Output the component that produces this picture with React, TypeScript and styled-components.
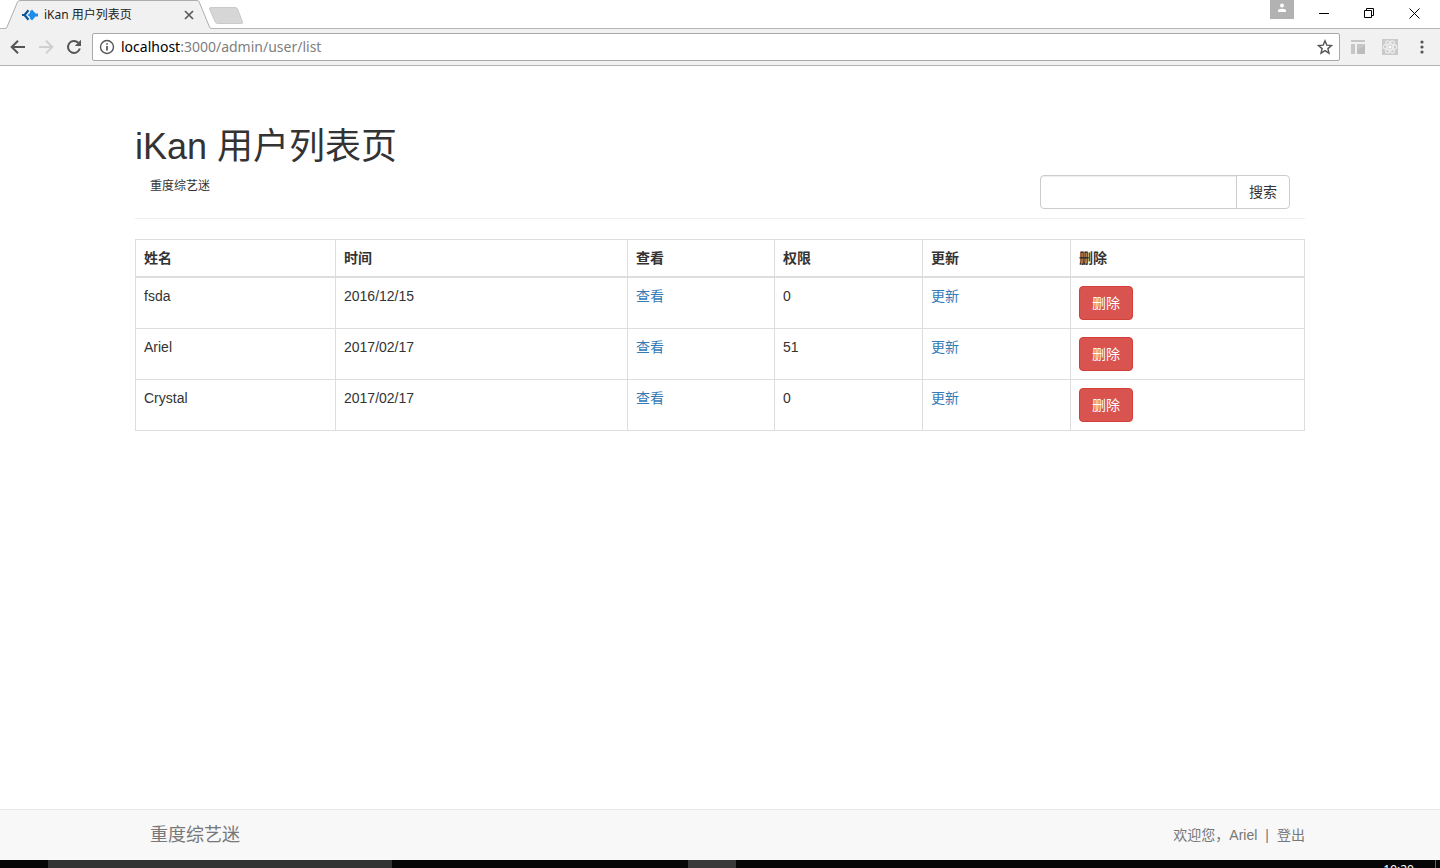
import React from "react";
import styled, { createGlobalStyle } from "styled-components";

const latin = '"Liberation Sans", "Noto Sans CJK SC", sans-serif';
const chromeFont = '"Noto Sans", "Noto Sans CJK SC", sans-serif';

const GlobalStyle = createGlobalStyle`
  *, *::before, *::after { box-sizing: border-box; }
  body {
    margin: 0;
    background: #fff;
    color: #333;
    font-family: ${latin};
    font-size: 14px;
    line-height: 20px;
  }
  button, input { font: inherit; margin: 0; }
`;

const Screen = styled.div`
  display: flex;
  flex-direction: column;
  min-height: 100vh;
`;

/* ---------- browser window ---------- */

const TabStrip = styled.div`
  display: flex;
  align-items: flex-start;
  height: 29px;
  border-bottom: 1px solid #b6b6b6;
  padding: 0 3px 0 5px;
`;

const Tab = styled.div`
  position: relative;
  display: flex;
  align-items: center;
  width: 207px;
  height: 29px;
  padding: 0 16px;
  gap: 5px;
  color: #222;
  font-family: ${chromeFont};
  font-size: 12px;
  line-height: 16px;
`;

const TabShape = styled.svg`
  position: absolute;
  inset: 0;
`;

const TabIcon = styled.svg`
  position: relative;
  flex: none;
`;

const TabTitle = styled.span`
  position: relative;
  flex: 1;
  white-space: nowrap;
`;

const PlainButton = styled.button`
  position: relative;
  display: flex;
  align-items: center;
  justify-content: center;
  flex: none;
  padding: 0;
  border: 0;
  background: none;
`;

const TabClose = styled(PlainButton)`
  width: 14px;
  height: 16px;
`;

const NewTab = styled(PlainButton)`
  margin: 6px 0 0 -4px;
`;

const WindowControls = styled.div`
  display: flex;
  align-items: flex-start;
  margin-left: auto;
`;

const ProfileButton = styled(PlainButton)`
  width: 24px;
  height: 19px;
  margin-right: 8px;
  padding-bottom: 3px;
  background: #b2b2b2;
`;

const WindowButton = styled(PlainButton)`
  width: 45px;
  height: 27px;
`;

const Toolbar = styled.div`
  display: flex;
  align-items: center;
  height: 37px;
  padding: 0 2px 0 4px;
  background: #f1f1f1;
  border-bottom: 1px solid #b3b3b3;
`;

const ToolButton = styled(PlainButton)<{ $width?: number }>`
  width: ${(p) => p.$width ?? 28}px;
  height: 28px;
`;

const AddressBox = styled.div`
  display: flex;
  align-items: center;
  flex: 1;
  height: 28px;
  margin: 0 2px 0 4px;
  padding: 0 6px;
  gap: 6px;
  background: #fff;
  border: 1px solid #a9a9a9;
  border-radius: 2px;
`;

const Address = styled.span`
  flex: 1;
  color: #808080;
  font-family: ${chromeFont};
  font-size: 14px;
  line-height: 20px;
`;

const Host = styled.span`
  color: #000;
`;

/* ---------- web page ---------- */

const Page = styled.main`
  flex: 1;
  width: 100%;
  max-width: 1200px;
  margin: 0 auto;
  padding: 61px 15px 20px;
`;

const Title = styled.h1`
  margin: 0;
  font-size: 36px;
  font-weight: 400;
  line-height: 40px;
`;

const SubHeader = styled.div`
  display: flex;
  justify-content: space-between;
  align-items: flex-start;
  margin: 8px 0 20px;
  padding: 0 15px 9px;
  border-bottom: 1px solid #eee;
`;

const SubTitle = styled.small`
  font-size: 12px;
  line-height: 22px;
`;

const SearchForm = styled.form`
  display: flex;
  width: 250px;
  height: 34px;
`;

const SearchInput = styled.input`
  flex: 1;
  min-width: 0;
  padding: 6px 12px;
  color: #555;
  background: #fff;
  border: 1px solid #ccc;
  border-radius: 4px 0 0 4px;
  box-shadow: inset 0 1px 1px rgba(0, 0, 0, 0.075);
`;

const Button = styled.button<{ $danger?: boolean; $attached?: boolean }>`
  padding: 6px 12px;
  margin-left: ${(p) => (p.$attached ? "-1px" : "0")};
  color: ${(p) => (p.$danger ? "#fff" : "#333")};
  background: ${(p) => (p.$danger ? "#d9534f" : "#fff")};
  border: 1px solid ${(p) => (p.$danger ? "#d43f3a" : "#ccc")};
  border-radius: ${(p) => (p.$attached ? "0 4px 4px 0" : "4px")};
  line-height: 20px;
  cursor: pointer;
`;

const UserTable = styled.table`
  width: 100%;
  border-collapse: collapse;
  table-layout: fixed;
  border: 1px solid #ddd;
`;

const Col = styled.col<{ $width: string }>`
  width: ${(p) => p.$width};
`;

const HeadCell = styled.th`
  padding: 8px;
  text-align: left;
  border: 1px solid #ddd;
  border-bottom-width: 2px;
`;

const Cell = styled.td`
  padding: 8px;
  vertical-align: top;
  border: 1px solid #ddd;
`;

const TextLink = styled.a`
  color: #337ab7;
  text-decoration: none;
`;

const Footer = styled.footer`
  height: 51px;
  background: #f8f8f8;
  border-top: 1px solid #e7e7e7;
`;

const FooterInner = styled.div`
  display: flex;
  align-items: center;
  justify-content: space-between;
  max-width: 1200px;
  height: 50px;
  margin: 0 auto;
  padding: 0 15px 0 30px;
  color: #777;
`;

const Brand = styled.a`
  color: #777;
  font-size: 18px;
  text-decoration: none;
`;

const Welcome = styled.p`
  display: flex;
  gap: 8px;
  margin: 0;
`;

const FooterLink = styled.a`
  color: #777;
  text-decoration: none;
`;

/* ---------- desktop task bar ---------- */

const TaskBar = styled.div`
  display: flex;
  height: 8px;
  overflow: hidden;
  background: #060606;
`;

const TaskItem = styled.div<{ $width: number; $tone?: string }>`
  flex: none;
  width: ${(p) => p.$width}px;
  background: ${(p) => p.$tone ?? "transparent"};
`;

const Clock = styled.time`
  margin: 0 4px 0 auto;
  padding: 2px 21px 0 0;
  border-right: 1px solid #666;
  color: #fff;
  font-family: ${chromeFont};
  font-size: 12px;
  line-height: 16px;
`;

const users = [
  { name: "fsda", date: "2016/12/15", role: 0 },
  { name: "Ariel", date: "2017/02/17", role: 51 },
  { name: "Crystal", date: "2017/02/17", role: 0 },
];

const columns = [
  { label: "姓名", width: "200px" },
  { label: "时间", width: "292px" },
  { label: "查看", width: "147px" },
  { label: "权限", width: "148px" },
  { label: "更新", width: "148px" },
  { label: "删除", width: "auto" },
];

function BrowserTabs() {
  return (
    <TabStrip>
      <Tab>
        <TabShape width="207" height="29" viewBox="0 0 207 29" aria-hidden="true">
          <path d="M0 29V28.5Q1.500 28.500 2 27L12.500 2Q13.300 .5 15 .5H192Q193.500 .5 194.200 2L204.500 27Q205.200 28.500 207 28.500V29Z" fill="#f1f1f1" />
          <path d="M0 28.500Q1.500 28.500 2 27L12.500 2Q13.300 .5 15 .5H192Q193.500 .5 194.200 2L204.500 27Q205.200 28.500 207 28.500" fill="none" stroke="#adadad" />
        </TabShape>
        <TabIcon width="18" height="14" viewBox="0 0 18 14" aria-hidden="true">
          <path d="M7.500 2.200 3.500 7l4 4.800M1 7h3" fill="none" stroke="#0b5596" strokeWidth="2.200" />
          <path d="M11 1.500 14.500 5.500H17v3H14.500L11 12.500 9 10.500V9L6.500 7 9 5V3.500Z" fill="#1c8eea" />
        </TabIcon>
        <TabTitle>iKan 用户列表页</TabTitle>
        <TabClose type="button" aria-label="Close tab">
          <svg width="10" height="10" viewBox="0 0 10 10">
            <path d="m1 1 8 8M9 1 1 9" stroke="#5a5a5a" strokeWidth="1.700" />
          </svg>
        </TabClose>
      </Tab>
      <NewTab type="button" aria-label="New tab">
        <svg width="36" height="19" viewBox="0 0 36 19">
          <path d="M3 1.500H27.500Q29 1.500 29.600 3L34.500 16Q35 17.500 33.500 17.500H9.500Q8 17.500 7.300 16L1.500 3Q1 1.500 3 1.500Z" fill="#d6d6d6" stroke="#cacaca" />
        </svg>
      </NewTab>
      <WindowControls>
        <ProfileButton type="button" aria-label="Profile">
          <svg width="10" height="10" viewBox="0 0 10 10" fill="#fff">
            <circle cx="5" cy="2.500" r="2" />
            <path d="M1 9V7.500Q1 5.700 5 5.700T9 7.500V9Z" />
          </svg>
        </ProfileButton>
        <WindowButton type="button" aria-label="Minimize">
          <svg width="11" height="11" viewBox="0 0 11 11">
            <path d="M0 5.500h10" stroke="#000" />
          </svg>
        </WindowButton>
        <WindowButton type="button" aria-label="Restore">
          <svg width="11" height="11" viewBox="0 0 11 11">
            <path d="M.5 2.500h7v7h-7zM2.500 2.500v-2h7v7h-2" fill="none" stroke="#000" />
          </svg>
        </WindowButton>
        <WindowButton type="button" aria-label="Close window">
          <svg width="11" height="11" viewBox="0 0 11 11">
            <path d="m.5 .5 10 10M10.500 .5l-10 10" stroke="#000" />
          </svg>
        </WindowButton>
      </WindowControls>
    </TabStrip>
  );
}

function BrowserToolbar() {
  return (
    <Toolbar>
      <ToolButton type="button" aria-label="Back">
        <svg width="16" height="16" viewBox="0 0 16 16">
          <path d="M15 8H2.500M8 1.700 1.700 8 8 14.300" fill="none" stroke="#555" strokeWidth="2" />
        </svg>
      </ToolButton>
      <ToolButton type="button" aria-label="Forward">
        <svg width="16" height="16" viewBox="0 0 16 16">
          <path d="M1 8h12.500M8 1.700 14.300 8 8 14.300" fill="none" stroke="#d0d0d0" strokeWidth="2" />
        </svg>
      </ToolButton>
      <ToolButton type="button" aria-label="Reload">
        <svg width="16" height="16" viewBox="0 0 16 16">
          <path d="M13.800 9.500A6 6 0 1 1 12.300 3.800" fill="none" stroke="#555" strokeWidth="2" />
          <path d="M15 .8V7H8.800Z" fill="#555" />
        </svg>
      </ToolButton>
      <AddressBox>
        <svg width="16" height="16" viewBox="0 0 16 16" aria-hidden="true">
          <circle cx="8" cy="8" r="6.500" fill="none" stroke="#555" strokeWidth="1.400" />
          <path d="M8 7v4.500M8 4.200v1.600" stroke="#555" strokeWidth="1.700" />
        </svg>
        <Address>
          <Host>localhost</Host>:3000/admin/user/list
        </Address>
        <PlainButton type="button" aria-label="Bookmark">
          <svg width="16" height="16" viewBox="0 0 16 16">
            <path d="m8 1.800 1.800 4.300 4.700.4-3.600 3.100 1.100 4.600L8 11.700l-4 2.500 1.100-4.600L1.500 6.500l4.700-.4Z" fill="none" stroke="#555" strokeWidth="1.400" />
          </svg>
        </PlainButton>
      </AddressBox>
      <ToolButton type="button" aria-label="Layout extension" $width={32}>
        <svg width="14" height="14" viewBox="0 0 14 14">
          <path d="M0 0h14v2H0zM0 4h4v10H0zM6 4h8v10H6z" fill="#c6c6c6" />
          <path d="M6 9q5 0 8-4v9H6z" fill="#bcbcbc" />
        </svg>
      </ToolButton>
      <ToolButton type="button" aria-label="React extension" $width={32}>
        <svg width="16" height="16" viewBox="0 0 16 16">
          <rect width="16" height="16" fill="#cacaca" />
          <g fill="none" stroke="#ececec" strokeWidth="1.200">
            <ellipse cx="8" cy="8" rx="6.800" ry="2.800" />
            <ellipse cx="8" cy="8" rx="6.800" ry="2.800" transform="rotate(60 8 8)" />
            <ellipse cx="8" cy="8" rx="6.800" ry="2.800" transform="rotate(120 8 8)" />
          </g>
          <circle cx="8" cy="8" r="1.500" fill="#fff" />
        </svg>
      </ToolButton>
      <ToolButton type="button" aria-label="Menu" $width={32}>
        <svg width="4" height="14" viewBox="0 0 4 14" fill="#555">
          <circle cx="2" cy="2" r="1.600" />
          <circle cx="2" cy="7" r="1.600" />
          <circle cx="2" cy="12" r="1.600" />
        </svg>
      </ToolButton>
    </Toolbar>
  );
}

export default function App() {
  return (
    <Screen>
      <GlobalStyle />
      <BrowserTabs />
      <BrowserToolbar />
      <Page>
        <Title>iKan 用户列表页</Title>
        <SubHeader>
          <SubTitle>重度综艺迷</SubTitle>
          <SearchForm onSubmit={(e) => e.preventDefault()}>
            <SearchInput type="text" name="q" aria-label="搜索" />
            <Button type="submit" $attached>搜索</Button>
          </SearchForm>
        </SubHeader>
        <UserTable>
          <colgroup>
            {columns.map((c) => (
              <Col key={c.label} $width={c.width} />
            ))}
          </colgroup>
          <thead>
            <tr>
              {columns.map((c) => (
                <HeadCell key={c.label} scope="col">{c.label}</HeadCell>
              ))}
            </tr>
          </thead>
          <tbody>
            {users.map((u) => (
              <tr key={u.name}>
                <Cell>{u.name}</Cell>
                <Cell>{u.date}</Cell>
                <Cell><TextLink href="#view">查看</TextLink></Cell>
                <Cell>{u.role}</Cell>
                <Cell><TextLink href="#update">更新</TextLink></Cell>
                <Cell><Button type="button" $danger>删除</Button></Cell>
              </tr>
            ))}
          </tbody>
        </UserTable>
      </Page>
      <Footer>
        <FooterInner>
          <Brand href="#home">重度综艺迷</Brand>
          <Welcome>
            <span>欢迎您，Ariel</span>
            <span>|</span>
            <FooterLink href="#logout">登出</FooterLink>
          </Welcome>
        </FooterInner>
      </Footer>
      <TaskBar>
        <TaskItem $width={48} />
        <TaskItem $width={344} $tone="#333" />
        <TaskItem $width={296} />
        <TaskItem $width={48} $tone="#393939" />
        <Clock>19:20</Clock>
      </TaskBar>
    </Screen>
  );
}
